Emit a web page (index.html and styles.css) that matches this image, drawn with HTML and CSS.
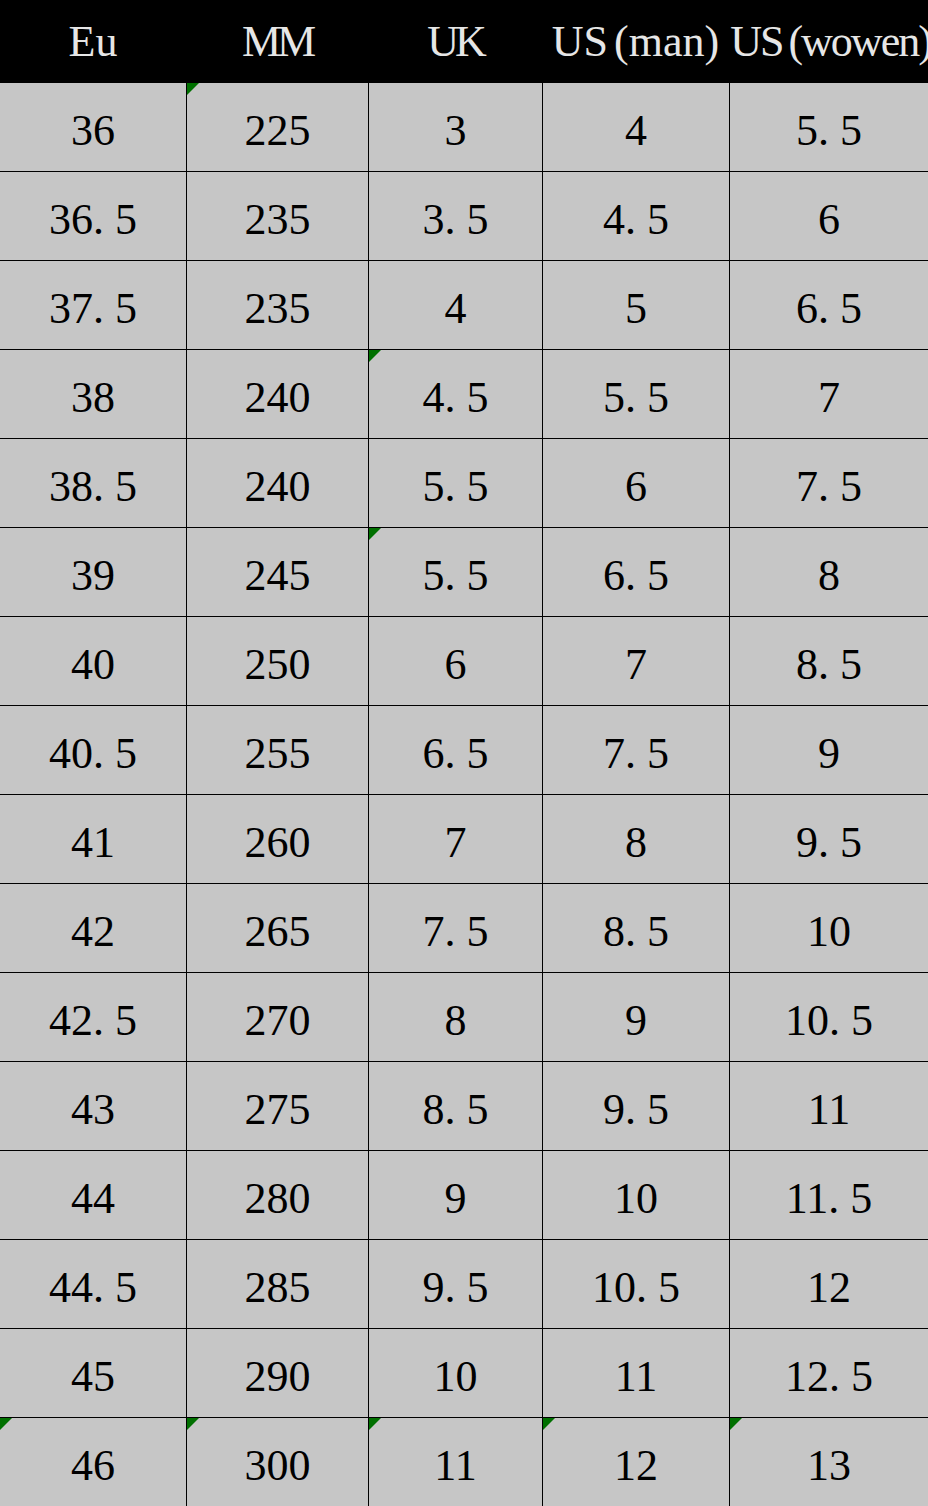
FILE: index.html
```html
<!DOCTYPE html>
<html>
<head>
<meta charset="utf-8">
<link rel="stylesheet" href="styles.css">
</head>
<body>
<div class="sheet">
  <div class="row head">
    <div class="cell">Eu</div>
    <div class="cell narrow">MM</div>
    <div class="cell narrow">UK</div>
    <div class="cell">US<span class="gap">(</span>man)</div>
    <div class="cell tight">US<span class="gap">(</span>wowen)</div>
  </div>
  <div class="row"><div class="cell">36</div><div class="cell tri">225</div><div class="cell">3</div><div class="cell">4</div><div class="cell">5<span class="d">.</span>5</div></div>
  <div class="row"><div class="cell">36<span class="d">.</span>5</div><div class="cell">235</div><div class="cell">3<span class="d">.</span>5</div><div class="cell">4<span class="d">.</span>5</div><div class="cell">6</div></div>
  <div class="row"><div class="cell">37<span class="d">.</span>5</div><div class="cell">235</div><div class="cell">4</div><div class="cell">5</div><div class="cell">6<span class="d">.</span>5</div></div>
  <div class="row"><div class="cell">38</div><div class="cell">240</div><div class="cell tri">4<span class="d">.</span>5</div><div class="cell">5<span class="d">.</span>5</div><div class="cell">7</div></div>
  <div class="row"><div class="cell">38<span class="d">.</span>5</div><div class="cell">240</div><div class="cell">5<span class="d">.</span>5</div><div class="cell">6</div><div class="cell">7<span class="d">.</span>5</div></div>
  <div class="row"><div class="cell">39</div><div class="cell">245</div><div class="cell tri">5<span class="d">.</span>5</div><div class="cell">6<span class="d">.</span>5</div><div class="cell">8</div></div>
  <div class="row"><div class="cell">40</div><div class="cell">250</div><div class="cell">6</div><div class="cell">7</div><div class="cell">8<span class="d">.</span>5</div></div>
  <div class="row"><div class="cell">40<span class="d">.</span>5</div><div class="cell">255</div><div class="cell">6<span class="d">.</span>5</div><div class="cell">7<span class="d">.</span>5</div><div class="cell">9</div></div>
  <div class="row"><div class="cell">41</div><div class="cell">260</div><div class="cell">7</div><div class="cell">8</div><div class="cell">9<span class="d">.</span>5</div></div>
  <div class="row"><div class="cell">42</div><div class="cell">265</div><div class="cell">7<span class="d">.</span>5</div><div class="cell">8<span class="d">.</span>5</div><div class="cell">10</div></div>
  <div class="row"><div class="cell">42<span class="d">.</span>5</div><div class="cell">270</div><div class="cell">8</div><div class="cell">9</div><div class="cell">10<span class="d">.</span>5</div></div>
  <div class="row"><div class="cell">43</div><div class="cell">275</div><div class="cell">8<span class="d">.</span>5</div><div class="cell">9<span class="d">.</span>5</div><div class="cell">11</div></div>
  <div class="row"><div class="cell">44</div><div class="cell">280</div><div class="cell">9</div><div class="cell">10</div><div class="cell">11<span class="d">.</span>5</div></div>
  <div class="row"><div class="cell">44<span class="d">.</span>5</div><div class="cell">285</div><div class="cell">9<span class="d">.</span>5</div><div class="cell">10<span class="d">.</span>5</div><div class="cell">12</div></div>
  <div class="row"><div class="cell">45</div><div class="cell">290</div><div class="cell">10</div><div class="cell">11</div><div class="cell">12<span class="d">.</span>5</div></div>
  <div class="row"><div class="cell tri">46</div><div class="cell tri">300</div><div class="cell tri">11</div><div class="cell tri">12</div><div class="cell tri">13</div></div>
</div>
</body>
</html>
```

FILE: styles.css
```css
html, body {
  margin: 0;
  padding: 0;
  background: #c6c6c6;
}

.sheet {
  width: 928px;
  font-family: "Liberation Serif", "Noto Sans CJK SC", serif;
  font-size: 44px;
  color: #000;
  background: #c6c6c6;
}

.row {
  display: grid;
  grid-template-columns: 186px 182px 174px 187px 199px;
  height: 89px;
  box-sizing: border-box;
  border-top: 1px solid #000;
}

.row.head {
  height: 83px;
  border-top: none;
  background: #000;
  color: #e6e6e6;
}

.row.head + .row {
  height: 88px;
  border-top: none;
}

.cell {
  position: relative;
  display: flex;
  align-items: center;
  justify-content: center;
  box-sizing: border-box;
  padding-top: 6px;
  white-space: nowrap;
}

.row .cell + .cell {
  border-left: 1px solid #000;
}

.row.head .cell {
  padding-top: 0;
  border-left: none;
}

.row.head .narrow {
  letter-spacing: -4px;
}

.row.head .tight {
  letter-spacing: -2px;
  padding-left: 4px;
}

.gap {
  margin-left: 6px;
}

.d {
  letter-spacing: 0.25em;
}

.tri::before {
  content: "";
  position: absolute;
  left: 0;
  top: 0;
  width: 0;
  height: 0;
  border-top: 12px solid #007000;
  border-right: 12px solid transparent;
}
```
